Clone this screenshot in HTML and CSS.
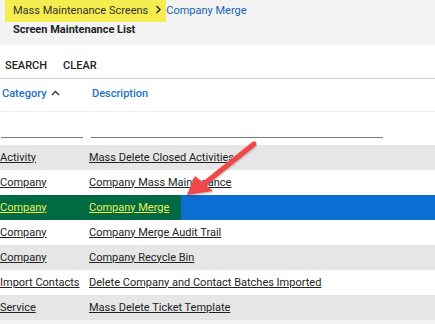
FILE: index.html
```html
<!DOCTYPE html>
<html>
<head>
<meta charset="utf-8">
<link rel="stylesheet" href="styles.css">
</head>
<body>
<header class="top">
  <div class="crumbs">
    <span class="crumb-hl">Mass Maintenance Screens<svg class="chev" width="7" height="9" viewBox="0 0 7 9"><path d="M1.5 1 L5 4.5 L1.5 8" fill="none" stroke="#222" stroke-width="1.4"/></svg></span><a class="crumb-link">Company Merge</a>
  </div>
  <div class="title">Screen Maintenance List</div>
</header>
<div class="toolbar">
  <span class="btn">SEARCH</span>
  <span class="btn">CLEAR</span>
</div>
<div class="head-row">
  <div class="c1 hd">Category <svg class="caret" width="9" height="6" viewBox="0 0 9 6"><path d="M1 5 L4.5 1.5 L8 5" fill="none" stroke="#333" stroke-width="1.4"/></svg></div>
  <div class="c2 hd">Description</div>
</div>
<div class="filter-row">
  <div class="f1"></div>
  <div class="f2"></div>
</div>
<div class="rows">
  <div class="row alt"><a class="c1">Activity</a><a class="c2">Mass Delete Closed Activities</a></div>
  <div class="row"><a class="c1">Company</a><a class="c2">Company Mass Maintenance</a></div>
  <div class="row sel"><div class="selgreen"><a class="c1">Company</a><a class="c2">Company Merge</a></div><div class="selblue"></div></div>
  <div class="row"><a class="c1">Company</a><a class="c2">Company Merge Audit Trail</a></div>
  <div class="row alt"><a class="c1">Company</a><a class="c2">Company Recycle Bin</a></div>
  <div class="row"><a class="c1">Import Contacts</a><a class="c2">Delete Company and Contact Batches Imported</a></div>
  <div class="row alt"><a class="c1">Service</a><a class="c2">Mass Delete Ticket Template</a></div>
  <div class="row last"></div>
</div>
<svg class="arrow" width="90" height="70" viewBox="0 0 90 70">
  <defs>
    <filter id="sh" x="-20%" y="-20%" width="140%" height="140%">
      <feDropShadow dx="0" dy="1" stdDeviation="1.2" flood-color="#000" flood-opacity="0.35"/>
    </filter>
  </defs>
  <g filter="url(#sh)">
    <line x1="78" y1="8" x2="28" y2="48" stroke="#f0474a" stroke-width="5" stroke-linecap="round"/>
    <polygon points="11,59 19,40 37,55" fill="#f0474a"/>
  </g>
</svg>
</body>
</html>
```
FILE: styles.css
```css
* { box-sizing: border-box; }
html, body { height: 324px; overflow: hidden; }
body {
  margin: 0;
  width: 435px;
  background: #fff;
  font-family: Roboto, "Liberation Sans", sans-serif;
  color: #222;
  position: relative;
}
.top {
  background: #f3f3f3;
  height: 45px;
  padding-left: 5px;
}
.crumbs {
  display: flex;
  align-items: flex-start;
  height: 22px;
  font-size: 11px;
  white-space: nowrap;
}
.crumb-hl {
  background: #f5ec50;
  height: 22px;
  padding: 4px 4px 0 8px;
  color: #333;
  display: flex;
  align-items: flex-start;
  flex: none;
}
.chev { margin: 1px 0 0 7px; flex: none; }
.crumb-link { color: #1565b5; padding-top: 4px; }
.title {
  font-size: 11px;
  font-weight: bold;
  color: #222;
  padding: 1px 0 0 8px;
}
.toolbar {
  height: 34px;
  display: flex;
  gap: 16px;
  padding: 14px 0 0 5px;
  font-size: 11px;
  font-weight: 500;
  border-bottom: 1px solid #cfcfcf;
}
.btn { color: #222; }
.head-row {
  display: flex;
  height: 33px;
  padding-top: 8px;
  border-bottom: 1px solid #eee;
  font-size: 11px;
  font-weight: 500;
}
.hd { color: #1a73c9; }
.caret { margin-left: 2px; vertical-align: 1px; }
.c1 { width: 89px; padding-left: 1px; flex: none; }
.c2 { flex: none; }
.head-row .c1 { padding-left: 2px; width: 92px; }
.filter-row {
  display: flex;
  height: 33px;
  align-items: flex-end;
  padding-bottom: 7px;
}
.f1 { width: 82px; margin-left: 1px; border-bottom: 1px solid #7a7a7a; }
.f2 { width: 292px; margin-left: 8px; border-bottom: 1px solid #7a7a7a; }
.rows { display: flex; flex-direction: column; }
.row {
  height: 25px;
  flex: none;
  display: flex;
  align-items: center;
  font-size: 11px;
  padding-bottom: 1px;
}
.row a { text-decoration: underline; color: #222; }
.row .c1 { padding-left: 0; }
.alt { background: #e6e6e6; }
.last { background: #f4f4f4; height: 5px; }
.sel { padding-bottom: 0; }
.selgreen {
  background: #006a42;
  width: 181px;
  height: 100%;
  display: flex;
  align-items: center;
  padding-bottom: 1px;
}
.selgreen a { color: #f0f050; }
.selblue { background: #0a6ed2; flex: 1; height: 100%; }
.arrow { position: absolute; left: 176px; top: 136px; }
```
